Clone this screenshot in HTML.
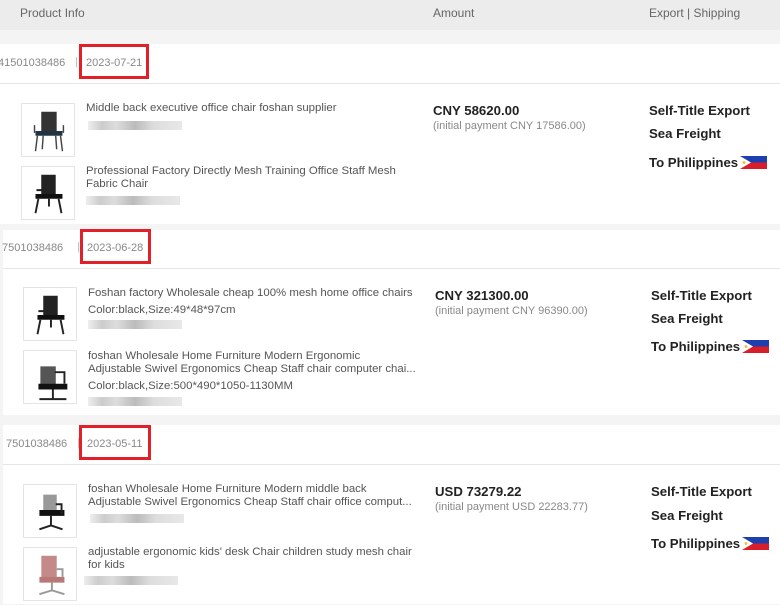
<!DOCTYPE html>
<html><head><meta charset="utf-8"><style>
*{margin:0;padding:0;box-sizing:border-box}
body{width:780px;height:604px;overflow:hidden;background:#f4f4f4;font-family:"Liberation Sans",sans-serif;position:relative}
.a{position:absolute;white-space:nowrap}
.hd{left:0;top:0;width:780px;height:30px;background:#ececec}
.blk{position:absolute;background:#fff;left:0;width:780px}
.g{color:#888;font-size:11px}
.t{color:#555;font-size:11.4px;line-height:13px;white-space:normal;width:335px}
.img{position:absolute;width:54px;height:54px;border:1px solid #e4e4e4;background:#fff}
.red{position:absolute;border:3px solid #e2202a}
.b{font-weight:bold;color:#222;font-size:13.2px}
.blur{position:absolute;height:9px;width:94px;background:linear-gradient(90deg,#eee,#ccc 15%,#ddd 30%,#bbb 50%,#ddd 70%,#e8e8e8)}
.line{position:absolute;height:1px;background:#e6e6e6;width:780px}
.flag{display:inline-block;width:27px;height:13px;vertical-align:-2px;margin-left:2px}
</style></head><body>
<div class="a hd"></div>
<div class="a g" style="left:20px;top:6px;font-size:12px;color:#666">Product Info</div>
<div class="a g" style="left:433px;top:6px;font-size:12px;color:#666">Amount</div>
<div class="a g" style="left:649px;top:6px;font-size:12px;color:#666">Export | Shipping</div>

<div class="blk" style="top:44px;height:180px"></div>
<div class="blk" style="top:230px;height:185px;left:3px"></div>
<div class="blk" style="top:425px;height:179px;left:3px"></div>
<div class="line" style="top:83px"></div>
<div class="line" style="top:268px;left:3px"></div>
<div class="line" style="top:464px;left:3px"></div>

<svg width="0" height="0" style="position:absolute"><defs>
<symbol id="c1" viewBox="0 0 54 54"><path d="M20 8h16v22H20z" fill="#333"/><path d="M14 28h28v5H14z" fill="#234"/><path d="M16 33l-2 16M40 33l2 16M22 33l-1 14M35 33l1 14M13 22v8M43 22v8" stroke="#444" stroke-width="1.5" fill="none"/></symbol>
<symbol id="c2" viewBox="0 0 54 54"><path d="M20 8h15v22H20z" fill="#222"/><path d="M14 28h28v5H14z" fill="#111"/><path d="M15 24h8M17 33l-3 15M38 33l3 15M28 33v8" stroke="#222" stroke-width="2" fill="none"/></symbol>
<symbol id="c3" viewBox="0 0 54 54"><path d="M17 16h16v20H17z" fill="#555"/><path d="M15 34h30v6H15z" fill="#111"/><path d="M32 22h10v12M30 40v9M16 50h28" stroke="#222" stroke-width="2" fill="none"/></symbol>
<symbol id="c4" viewBox="0 0 54 54"><path d="M20 10h14v18H20z" fill="#999"/><path d="M16 26h26v6H16z" fill="#111"/><path d="M33 20h6v10M28 32v10M16 46l12-4 12 4" stroke="#222" stroke-width="2" fill="none"/></symbol>
<symbol id="c5" viewBox="0 0 54 54"><path d="M18 8h16v24H18z" fill="#c48a8a"/><path d="M16 30h26v6H16z" fill="#b87878"/><path d="M34 22h6v8M29 36v8M16 48l13-4 13 4" stroke="#999" stroke-width="2" fill="none"/></symbol>
<symbol id="ph" viewBox="0 0 27 13"><rect width="27" height="6.5" fill="#1e3fb0"/><rect y="6.5" width="27" height="6.5" fill="#d81e2a"/><path d="M0 0L11 6.5 0 13z" fill="#fff"/><circle cx="4" cy="6.5" r="1.5" fill="#f4c430"/></symbol>
</defs></svg>

<!-- block 1 -->
<div class="a g" style="left:-2px;top:57px">41501038486</div>
<div class="a g" style="left:75px;top:56px;color:#bbb">|</div>
<div class="a g" style="left:86px;top:57px">2023-07-21</div>
<div class="red" style="left:79px;top:44px;width:70px;height:35px"></div>
<div class="img" style="left:21px;top:103px"><svg width="52" height="52"><use href="#c1"/></svg></div>
<div class="a t" style="left:86px;top:102px">Middle back executive office chair foshan supplier</div>
<div class="blur" style="left:88px;top:121px"></div>
<div class="img" style="left:21px;top:166px"><svg width="52" height="52"><use href="#c2"/></svg></div>
<div class="a t" style="left:86px;top:165px">Professional Factory Directly Mesh Training Office Staff Mesh Fabric Chair</div>
<div class="blur" style="left:86px;top:196px"></div>
<div class="a b" style="left:433px;top:103px">CNY 58620.00</div>
<div class="a g" style="left:433px;top:120px">(initial payment CNY 17586.00)</div>
<div class="a b" style="left:649px;top:103px">Self-Title Export</div>
<div class="a b" style="left:649px;top:126px">Sea Freight</div>
<div class="a b" style="left:649px;top:155px">To Philippines<svg class="flag"><use href="#ph"/></svg></div>

<!-- block 2 -->
<div class="a g" style="left:2px;top:242px">7501038486</div>
<div class="a g" style="left:77px;top:241px;color:#bbb">|</div>
<div class="a g" style="left:87px;top:242px">2023-06-28</div>
<div class="red" style="left:80px;top:229px;width:71px;height:35px"></div>
<div class="img" style="left:23px;top:287px"><svg width="52" height="52"><use href="#c2"/></svg></div>
<div class="a t" style="left:88px;top:287px;width:340px">Foshan factory Wholesale cheap 100% mesh home office chairs</div>
<div class="a t" style="left:88px;top:304px">Color:black,Size:49*48*97cm</div>
<div class="blur" style="left:88px;top:320px"></div>
<div class="img" style="left:23px;top:350px"><svg width="52" height="52"><use href="#c3"/></svg></div>
<div class="a t" style="left:88px;top:350px;width:335px">foshan Wholesale Home Furniture Modern Ergonomic<br>Adjustable Swivel Ergonomics Cheap Staff chair computer chai...</div>
<div class="a t" style="left:88px;top:380px">Color:black,Size:500*490*1050-1130MM</div>
<div class="blur" style="left:88px;top:397px"></div>
<div class="a b" style="left:435px;top:288px">CNY 321300.00</div>
<div class="a g" style="left:435px;top:305px">(initial payment CNY 96390.00)</div>
<div class="a b" style="left:651px;top:288px">Self-Title Export</div>
<div class="a b" style="left:651px;top:311px">Sea Freight</div>
<div class="a b" style="left:651px;top:339px">To Philippines<svg class="flag"><use href="#ph"/></svg></div>

<!-- block 3 -->
<div class="a g" style="left:6px;top:438px">7501038486</div>
<div class="a g" style="left:77px;top:437px;color:#bbb">|</div>
<div class="a g" style="left:87px;top:438px">2023-05-11</div>
<div class="red" style="left:79px;top:425px;width:72px;height:35px"></div>
<div class="img" style="left:23px;top:484px"><svg width="52" height="52"><use href="#c4"/></svg></div>
<div class="a t" style="left:88px;top:483px;width:335px">foshan Wholesale Home Furniture Modern middle back<br>Adjustable Swivel Ergonomics Cheap Staff chair office comput...</div>
<div class="blur" style="left:90px;top:514px"></div>
<div class="img" style="left:23px;top:547px"><svg width="52" height="52"><use href="#c5"/></svg></div>
<div class="a t" style="left:88px;top:546px">adjustable ergonomic kids' desk Chair children study mesh chair for kids</div>
<div class="blur" style="left:84px;top:576px"></div>
<div class="a b" style="left:435px;top:484px">USD 73279.22</div>
<div class="a g" style="left:435px;top:501px">(initial payment USD 22283.77)</div>
<div class="a b" style="left:651px;top:484px">Self-Title Export</div>
<div class="a b" style="left:651px;top:508px">Sea Freight</div>
<div class="a b" style="left:651px;top:536px">To Philippines<svg class="flag"><use href="#ph"/></svg></div>
</body></html>
